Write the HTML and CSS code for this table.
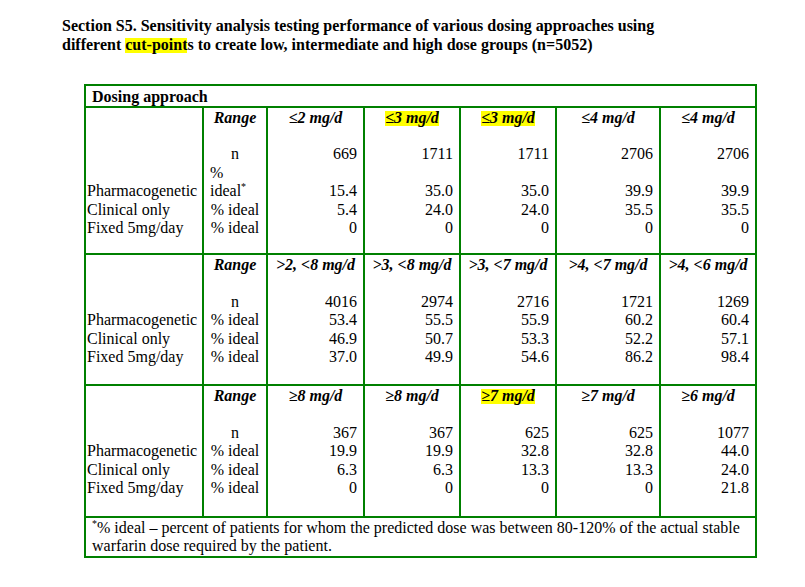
FILE: index.html
```html
<!DOCTYPE html>
<html>
<head>
<meta charset="utf-8">
<link rel="stylesheet" href="styles.css">
</head>
<body>
<div class="page">
  <h1 class="title">Section S5. Sensitivity analysis testing performance of various dosing approaches using<br>different <span class="hl">cut-point</span>s to create low, intermediate and high dose groups (n=5052)</h1>
  <table class="dose">
    <colgroup>
      <col class="c-label"><col class="c-range"><col class="c-n1"><col class="c-n2"><col class="c-n3"><col class="c-n4"><col class="c-n5">
    </colgroup>
    <tr class="top"><th colspan="7" class="cap">Dosing approach</th></tr>

    <tr class="sec head">
      <td></td><td class="rng">Range</td>
      <td class="hd">≤2 mg/d</td><td class="hd"><span class="hl">≤3 mg/d</span></td><td class="hd"><span class="hl">≤3 mg/d</span></td><td class="hd">≤4 mg/d</td><td class="hd">≤4 mg/d</td>
    </tr>
    <tr class="blank"><td></td><td></td><td></td><td></td><td></td><td></td><td></td></tr>
    <tr><td></td><td class="mid">n</td><td class="num">669</td><td class="num">1711</td><td class="num">1711</td><td class="num">2706</td><td class="num">2706</td></tr>
    <tr class="bot"><td class="lbl">Pharmacogenetic</td><td class="left">%<br>ideal<sup>*</sup></td><td class="num">15.4</td><td class="num">35.0</td><td class="num">35.0</td><td class="num">39.9</td><td class="num">39.9</td></tr>
    <tr><td class="lbl">Clinical only</td><td class="mid">% ideal</td><td class="num">5.4</td><td class="num">24.0</td><td class="num">24.0</td><td class="num">35.5</td><td class="num">35.5</td></tr>
    <tr><td class="lbl">Fixed 5mg/day</td><td class="mid">% ideal</td><td class="num">0</td><td class="num">0</td><td class="num">0</td><td class="num">0</td><td class="num">0</td></tr>
    <tr class="blank short"><td></td><td></td><td></td><td></td><td></td><td></td><td></td></tr>

    <tr class="sec head">
      <td></td><td class="rng">Range</td>
      <td class="hd">&gt;2, &lt;8 mg/d</td><td class="hd">&gt;3, &lt;8 mg/d</td><td class="hd">&gt;3, &lt;7 mg/d</td><td class="hd">&gt;4, &lt;7 mg/d</td><td class="hd">&gt;4, &lt;6 mg/d</td>
    </tr>
    <tr class="blank"><td></td><td></td><td></td><td></td><td></td><td></td><td></td></tr>
    <tr><td></td><td class="mid">n</td><td class="num">4016</td><td class="num">2974</td><td class="num">2716</td><td class="num">1721</td><td class="num">1269</td></tr>
    <tr><td class="lbl">Pharmacogenetic</td><td class="mid">% ideal</td><td class="num">53.4</td><td class="num">55.5</td><td class="num">55.9</td><td class="num">60.2</td><td class="num">60.4</td></tr>
    <tr><td class="lbl">Clinical only</td><td class="mid">% ideal</td><td class="num">46.9</td><td class="num">50.7</td><td class="num">53.3</td><td class="num">52.2</td><td class="num">57.1</td></tr>
    <tr><td class="lbl">Fixed 5mg/day</td><td class="mid">% ideal</td><td class="num">37.0</td><td class="num">49.9</td><td class="num">54.6</td><td class="num">86.2</td><td class="num">98.4</td></tr>
    <tr class="blank"><td></td><td></td><td></td><td></td><td></td><td></td><td></td></tr>

    <tr class="sec head">
      <td></td><td class="rng">Range</td>
      <td class="hd">≥8 mg/d</td><td class="hd">≥8 mg/d</td><td class="hd"><span class="hl">≥7 mg/d</span></td><td class="hd">≥7 mg/d</td><td class="hd">≥6 mg/d</td>
    </tr>
    <tr class="blank"><td></td><td></td><td></td><td></td><td></td><td></td><td></td></tr>
    <tr><td></td><td class="mid">n</td><td class="num">367</td><td class="num">367</td><td class="num">625</td><td class="num">625</td><td class="num">1077</td></tr>
    <tr><td class="lbl">Pharmacogenetic</td><td class="mid">% ideal</td><td class="num">19.9</td><td class="num">19.9</td><td class="num">32.8</td><td class="num">32.8</td><td class="num">44.0</td></tr>
    <tr><td class="lbl">Clinical only</td><td class="mid">% ideal</td><td class="num">6.3</td><td class="num">6.3</td><td class="num">13.3</td><td class="num">13.3</td><td class="num">24.0</td></tr>
    <tr><td class="lbl">Fixed 5mg/day</td><td class="mid">% ideal</td><td class="num">0</td><td class="num">0</td><td class="num">0</td><td class="num">0</td><td class="num">21.8</td></tr>
    <tr class="blank"><td></td><td></td><td></td><td></td><td></td><td></td><td></td></tr>

    <tr class="sec"><td colspan="7" class="note"><sup>*</sup>% ideal – percent of patients for whom the predicted dose was between 80-120% of the actual stable<br>warfarin dose required by the patient.</td></tr>
  </table>
</div>
</body>
</html>
```

FILE: styles.css
```css
html, body {
  margin: 0;
  padding: 0;
  background: #ffffff;
}
body {
  font-family: "Liberation Serif", "Times New Roman", serif;
  font-size: 16px;
  color: #000;
}
.page {
  padding: 16px 0 0 62px;
}
.title {
  margin: 0;
  font-size: 16px;
  font-weight: bold;
  line-height: 19px;
}
.hl {
  background: linear-gradient(#ffff00, #ffff00) 0 2px / 100% 15px no-repeat;
}
.dose {
  margin: 30px 0 0 22px;
  border-collapse: collapse;
  table-layout: fixed;
  width: 673px;
  border: 2px solid #008000;
  line-height: 18.4px;
}
.c-label { width: 118px; }
.c-range { width: 64px; }
.c-n1 { width: 97px; }
.c-n2 { width: 96px; }
.c-n3 { width: 96px; }
.c-n4 { width: 104px; }
.c-n5 { width: 96px; }
.dose td, .dose th {
  padding: 0;
  border-left: 2px solid #008000;
  border-right: 2px solid #008000;
  vertical-align: bottom;
  white-space: nowrap;
}
.dose tr.sec td {
  border-top: 2px solid #008000;
}
.dose tr.head td {
  padding-top: 1px;
  vertical-align: top;
}
.dose tr.blank td {
  height: 18px;
}
.dose tr.blank.short td {
  height: 16px;
}
.cap {
  text-align: left;
  font-weight: bold;
  padding: 1px 0 0 6px !important;
  height: 19px;
}
.rng, .hd {
  font-weight: bold;
  font-style: italic;
  text-align: center;
}
.mid { text-align: center; }
.left { text-align: left; padding-left: 6px !important; }
.num { text-align: right; padding-right: 6px !important; }
.lbl { padding-left: 1px !important; }
.dose sup {
  font-size: 10px;
  line-height: 0;
  vertical-align: 6px;
}
.note {
  padding: 1px 0 1px 6px !important;
  text-align: left;
}
```
